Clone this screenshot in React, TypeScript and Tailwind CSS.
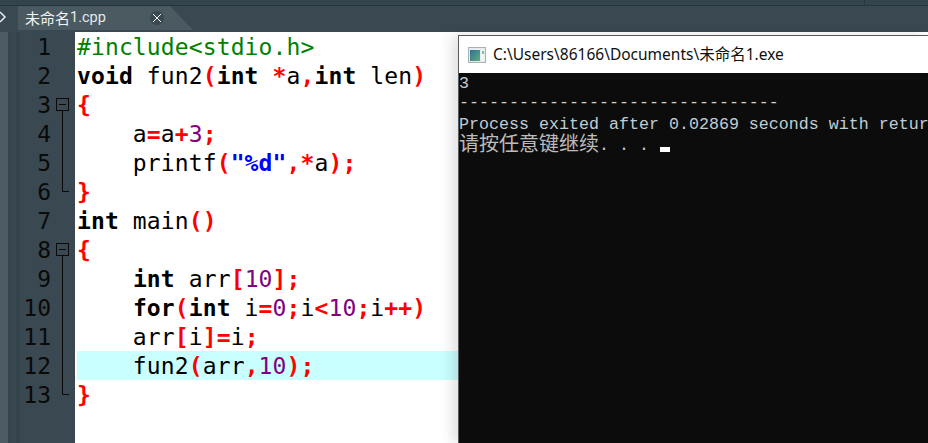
import React from "react";

type Kind = "p" | "k" | "s" | "n" | "q" | "t";
type Token = [Kind, string];

const tokenClass: Record<Kind, string> = {
  p: "text-[#008000]",
  k: "font-bold text-black",
  s: "font-bold text-[#ff0000]",
  n: "text-[#800080]",
  q: "font-bold text-[#0000ff]",
  t: "text-black",
};

const lines: Token[][] = [
  [["p", "#include<stdio.h>"]],
  [["k", "void"], ["t", " fun2"], ["s", "("], ["k", "int"], ["t", " "], ["s", "*"], ["t", "a"], ["s", ","], ["k", "int"], ["t", " len"], ["s", ")"]],
  [["s", "{"]],
  [["t", "    a"], ["s", "="], ["t", "a"], ["s", "+"], ["n", "3"], ["s", ";"]],
  [["t", "    printf"], ["s", "("], ["q", "\"%d\""], ["s", ","], ["s", "*"], ["t", "a"], ["s", ");"]],
  [["s", "}"]],
  [["k", "int"], ["t", " main"], ["s", "()"]],
  [["s", "{"]],
  [["t", "    "], ["k", "int"], ["t", " arr"], ["s", "["], ["n", "10"], ["s", "];"]],
  [["t", "    "], ["k", "for"], ["s", "("], ["k", "int"], ["t", " i"], ["s", "="], ["n", "0"], ["s", ";"], ["t", "i"], ["s", "<"], ["n", "10"], ["s", ";"], ["t", "i"], ["s", "++)"]],
  [["t", "    arr"], ["s", "["], ["t", "i"], ["s", "]="], ["t", "i"], ["s", ";"]],
  [["t", "    fun2"], ["s", "("], ["t", "arr"], ["s", ","], ["n", "10"], ["s", ");"]],
  [["s", "}"]],
];

const folds: Record<number, "box" | "line" | "end"> = {
  3: "box", 4: "line", 5: "line", 6: "end",
  8: "box", 9: "line", 10: "line", 11: "line", 12: "line", 13: "end",
};

function Fold({ type }: { type?: "box" | "line" | "end" }) {
  if (!type) return null;
  return (
    <svg width="14" height="29" viewBox="0 0 14 29" className="block">
      {type === "box" && (
        <>
          <rect x="1.5" y="8.5" width="12" height="12" fill="none" stroke="#0a0a0a" />
          <path d="M4 14.5h7M7.5 21v8" stroke="#0a0a0a" fill="none" />
        </>
      )}
      {type === "line" && <path d="M7.5 0v29" stroke="#0a0a0a" fill="none" />}
      {type === "end" && <path d="M7.5 0v14.5H14" stroke="#0a0a0a" fill="none" />}
    </svg>
  );
}

export default function App() {
  return (
    <div className="relative flex h-[443px] w-[928px] flex-col overflow-hidden bg-[#3a4951]">
      {/* top chrome */}
      <div className="relative h-8 shrink-0 bg-[#3a4951]">
        <div className="flex h-[6px] border-b border-[#26343b] bg-[#34444c]">
          <div className="ml-auto mr-[63px] w-px bg-[#26343b]" />
        </div>
        <div className="flex h-[26px] items-start">
          <svg width="10" height="20" viewBox="0 0 10 20" className="mt-[1px] block">
            <path d="M0 5l5 5-5 5" stroke="#e8ecee" strokeWidth="1.5" fill="none" />
          </svg>
          <div className="ml-2 flex h-[24px] w-[175px] items-center bg-[#4b5961] pl-[7px] [clip-path:polygon(0_0,152px_0,100%_100%,0_100%)]">
            <span className="text-[15px] text-[#f0f2f3] [font-family:'Noto_Sans_CJK_SC','Noto_Sans',sans-serif]">未命名</span>
            <span className="text-[14.5px] text-[#e4e8ea] [font-family:'Roboto',sans-serif]">1.cpp</span>
            <div className="ml-[44px] flex h-[14px] w-[14px] items-center justify-center rounded-full bg-[#3a4951]">
              <svg width="10" height="10" viewBox="0 0 10 10" className="block">
                <path d="M1 1l8 8M9 1l-8 8" stroke="#ffffff" strokeWidth="1" fill="none" />
              </svg>
            </div>
          </div>
        </div>
      </div>

      <div className="flex flex-1">
        {/* gutter */}
        <div className="flex w-[75px] shrink-0">
          <div className="w-2 bg-[#4c5a62]" />
          <div className="w-1 bg-[#364650]" />
          <div className="w-1 bg-[#3a4951]" />
          <div className="w-1 bg-[#34444c]" />
          <div className="flex-1 text-[23px] leading-[31px] text-[#0a0a0a] [font-family:'DejaVu_Sans_Mono',monospace]">
            {lines.map((_, i) => (
              <div key={i} className="flex h-[29px]">
                <div className="w-[31px] text-right">{i + 1}</div>
                <div className="ml-[4px]">
                  <Fold type={folds[i + 1]} />
                </div>
              </div>
            ))}
          </div>
        </div>

        {/* editor */}
        <div className="flex-1 bg-white pl-[2px] text-[23px] leading-[31px] tracking-[0.12px] [font-family:'DejaVu_Sans_Mono',monospace]">
          {lines.map((tokens, i) => (
            <div key={i} className={`h-[29px] whitespace-pre ${i === 11 ? "bg-[#caffff]" : ""}`}>
              {tokens.map(([kind, text], j) => (
                <span key={j} className={tokenClass[kind]}>{text}</span>
              ))}
            </div>
          ))}
        </div>
      </div>

      {/* console window */}
      <div className="absolute left-[458px] top-[35px] flex h-[408px] w-[470px] flex-col border-l border-t border-[#5a5a5a] bg-[#0c0c0c] shadow-[-6px_0_12px_rgba(0,0,0,0.12)]">
        <div className="flex h-[37px] shrink-0 items-center bg-white pl-[9px]">
          <svg width="18" height="16" viewBox="0 0 18 16" className="block">
            <defs>
              <linearGradient id="consoleIcon" x1="0" y1="0" x2="1" y2="1">
                <stop offset="0" stopColor="#2f6f95" />
                <stop offset="1" stopColor="#5fae7d" />
              </linearGradient>
            </defs>
            <rect x="0.5" y="0.5" width="17" height="15" fill="#e6ecec" stroke="#a8b2b5" />
            <rect x="2" y="3" width="10" height="11" fill="url(#consoleIcon)" />
            <rect x="13" y="3" width="3" height="11" fill="#f4f6f6" />
            <path d="M15 4v3" stroke="#3a6a70" />
          </svg>
          <span className="ml-[7px] whitespace-pre text-[15.5px] text-[#111] [font-family:'Noto_Sans','Noto_Sans_CJK_SC',sans-serif]">
            C:\Users\86166\Documents\未命名1.exe
          </span>
        </div>
        <div className="overflow-hidden whitespace-pre text-[16.67px] text-[#cccccc] [font-family:'Liberation_Mono','Noto_Sans_CJK_SC',monospace]">
          <div className="h-5 leading-[22px]">3</div>
          <div className="h-5 leading-[20px]">--------------------------------</div>
          <div className="h-5 leading-[24px] text-[#c0ccd4]">Process exited after 0.02869 seconds with return value 0</div>
          <div className="flex h-5 items-start">
            <span className="text-[20px] leading-[20px] text-[#bcbcbc] [font-family:'Noto_Sans_CJK_SC',sans-serif]">请按任意键继续</span>
            <span className="leading-[26px]">. . . </span>
            <span className="ml-[1px] mt-[14px] h-[5px] w-[10px] bg-white" />
          </div>
        </div>
      </div>
    </div>
  );
}
